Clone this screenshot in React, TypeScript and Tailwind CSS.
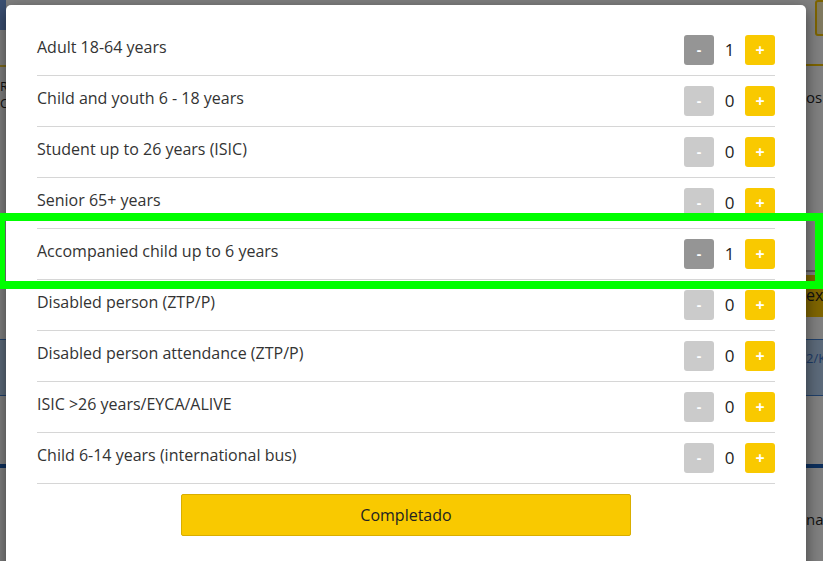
import React from "react";

const rows: [string, number][] = [
  ["Adult 18-64 years", 1],
  ["Child and youth 6 - 18 years", 0],
  ["Student up to 26 years (ISIC)", 0],
  ["Senior 65+ years", 0],
  ["Accompanied child up to 6 years", 1],
  ["Disabled person (ZTP/P)", 0],
  ["Disabled person attendance (ZTP/P)", 0],
  ["ISIC >26 years/EYCA/ALIVE", 0],
  ["Child 6-14 years (international bus)", 0],
];

function Row({ label, count }: { label: string; count: number }) {
  return (
    <div className="flex items-start justify-between pt-[10px] pb-[10px] border-b border-[#d6d6d6]">
      <span className="text-[16px] leading-[24px] text-[#333]">{label}</span>
      <div className="flex items-center">
        <button
          className={
            "w-[30px] h-[30px] rounded-[3px] text-white font-bold text-[14px] leading-none flex items-center justify-center " +
            (count > 0 ? "bg-[#959595]" : "bg-[#cbcbcb]")
          }
        >
          -
        </button>
        <span className="w-[31px] text-center text-[17px] text-[#222] leading-[30px]">{count}</span>
        <button className="w-[30px] h-[30px] rounded-[3px] bg-[#f9c900] text-white font-bold text-[16px] leading-none flex items-center justify-center">
          +
        </button>
      </div>
    </div>
  );
}

export default function App() {
  return (
    <div
      className="relative w-[823px] h-[561px] overflow-hidden bg-[#808080]"
      style={{ fontFamily: '"Open Sans", "Noto Sans", sans-serif' }}
    >
      {/* obscured page behind the overlay */}
      <div className="absolute left-0 top-0 w-[6px] h-[30px] bg-[#3a4f72]" />
      <div className="absolute left-0 top-[65px] w-[6px] h-[2px] bg-[#7d6a1e]" />
      <div className="absolute left-0 top-[78px] text-[13px] text-[#111] leading-[16px]">R</div>
      <div className="absolute left-0 top-[95px] text-[13px] text-[#111] leading-[16px]">C</div>
      <div className="absolute left-0 top-[339px] w-[6px] h-[57px] bg-[#5c6a7a] border-y border-[#20406a]" />
      <div className="absolute left-0 top-[464px] w-[6px] h-[4px] bg-[#0d2f5c]" />
      <div className="absolute left-[815px] top-0 w-[12px] h-[36px] rounded-[3px] border-2 border-[#7d6400] bg-[#807a60]" />
      <div className="absolute left-[806px] top-[64px] w-[17px] h-[2px] bg-[#7d6400]" />
      <div className="absolute left-[806px] top-[86px] text-[15px] text-[#111]">os</div>
      <div className="absolute left-[806px] top-[270px] w-[17px] h-[2px] bg-[#555]" />
      <div className="absolute left-[806px] top-[275px] w-[17px] h-[42px] bg-[#7f6500] text-[16px] text-[#111] pt-[10px] leading-[20px]">ex</div>
      <div className="absolute left-[806px] top-[339px] w-[17px] h-[57px] bg-[#5c6a7a] border-y border-[#20406a] text-[13px] text-[#1c3a66] pt-[9px] overflow-hidden whitespace-nowrap">2/K</div>
      <div className="absolute left-[806px] top-[464px] w-[17px] h-[4px] bg-[#0d2f5c]" />
      <div className="absolute left-[806px] top-[508px] text-[15px] text-[#111]">na</div>

      {/* modal */}
      <div className="relative ml-[6px] mt-[5px] w-[800px] h-[600px] bg-white rounded-[5px] shadow-[0_5px_15px_rgba(0,0,0,0.5)] px-[31px] pt-[20px]">
        {rows.map(([l, c]) => (
          <Row key={l} label={l} count={c} />
        ))}
        <div className="flex justify-center mt-[10px]">
          <button className="w-[450px] h-[42px] bg-[#f9c900] border border-[#d9ae00] rounded-[2px] text-[16px] font-medium text-[#222]">
            Completado
          </button>
        </div>
      </div>

      {/* highlight annotation */}
      <div className="absolute left-[-3px] top-[213px] w-[826px] h-[76px] border-[8px] border-[#00ff00]" />
    </div>
  );
}
